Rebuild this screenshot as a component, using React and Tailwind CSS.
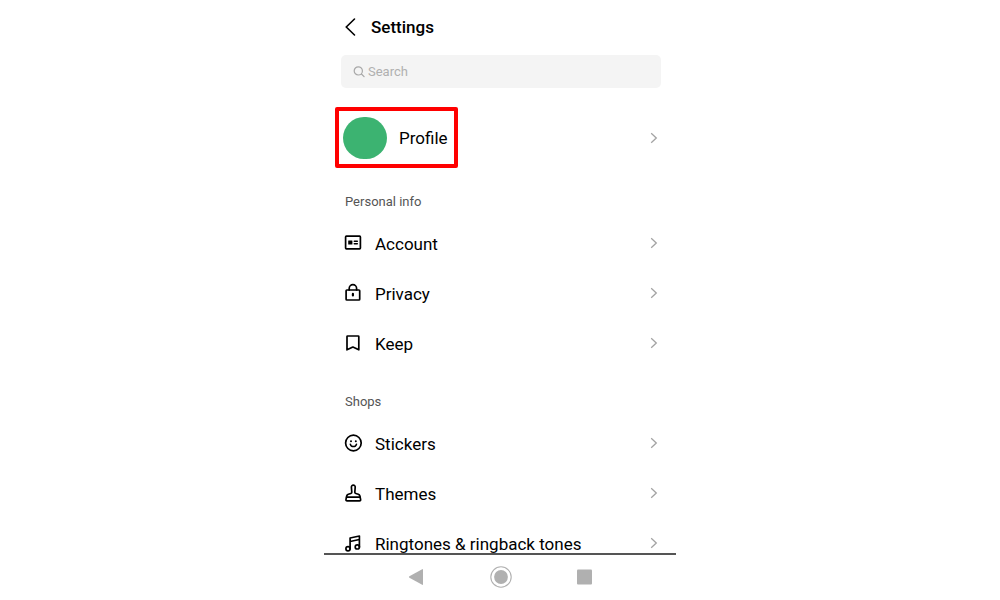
import { clsx } from 'clsx';

function Icon({ children }) {
  return (
    <svg
      viewBox="0 0 20 20"
      className="h-5 w-5 flex-shrink-0"
      fill="none"
      stroke="currentColor"
      strokeWidth="1.7"
      strokeLinecap="round"
      strokeLinejoin="round"
      aria-hidden="true"
    >
      {children}
    </svg>
  );
}

function AccountIcon() {
  return (
    <Icon>
      <rect x="2.6" y="3.2" width="14.8" height="12.6" rx="0.8" />
      <rect x="5.2" y="7.4" width="4.2" height="4.2" rx="0.4" fill="currentColor" stroke="none" />
      <path d="M11.3 8.2h3M11.3 10.8h3" strokeWidth="1.5" />
    </Icon>
  );
}

function PrivacyIcon() {
  return (
    <Icon>
      <rect x="3.1" y="7" width="13.6" height="10" rx="0.8" />
      <path d="M6.2 7V5.4a3.7 3.7 0 0 1 7.4 0V7" />
      <path d="M9.9 10.9v1.6" strokeWidth="2.2" />
    </Icon>
  );
}

function KeepIcon() {
  return (
    <Icon>
      <path d="M4 3.6a.6.6 0 0 1 .6-.6h10.6a.6.6 0 0 1 .6.6v13.2L9.9 14 4 16.8z" />
    </Icon>
  );
}

function StickersIcon() {
  return (
    <Icon>
      <circle cx="10.4" cy="10" r="7.8" />
      <circle cx="8" cy="8.3" r="1" fill="currentColor" stroke="none" />
      <circle cx="12.8" cy="8.3" r="1" fill="currentColor" stroke="none" />
      <path d="M7.3 11.2c.5 1.6 1.6 2.4 3.1 2.4s2.6-.8 3.1-2.4" strokeWidth="1.5" />
    </Icon>
  );
}

function ThemesIcon() {
  return (
    <Icon>
      <path d="M8.8 9.2 8.4 4.2c-.1-1.2.7-2 1.9-2s2 .8 1.9 2l-.4 5c0 .7.3 1.1 1 1.3l2.5.7c.9.3 1.3.8 1.5 1.6l.8 3.6c.2.9-.2 1.4-1.1 1.4H4.1c-.9 0-1.3-.5-1.1-1.4l.8-3.6c.2-.8.6-1.3 1.5-1.6l2.5-.7c.7-.2 1-.6 1-1.3z" />
      <path d="M3.6 14.2h13.4" />
    </Icon>
  );
}

function RingtonesIcon() {
  return (
    <Icon>
      <circle cx="5" cy="15.7" r="2.1" />
      <circle cx="14.3" cy="13.9" r="2.1" />
      <path d="M7.1 15.7V5l9.3-2v10.9M7.1 8.5l9.3-2" />
    </Icon>
  );
}

function Chevron() {
  return (
    <svg
      viewBox="0 0 8 12"
      className="ml-auto h-3 w-2 flex-shrink-0 text-[#a3a3a3]"
      fill="none"
      stroke="currentColor"
      strokeWidth="1.3"
      aria-hidden="true"
    >
      <path d="M1.2 1.2 6.3 6l-5.1 4.8" />
    </svg>
  );
}

const sections = [
  {
    title: 'Personal info',
    items: [
      { label: 'Account', icon: AccountIcon },
      { label: 'Privacy', icon: PrivacyIcon },
      { label: 'Keep', icon: KeepIcon },
    ],
  },
  {
    title: 'Shops',
    items: [
      { label: 'Stickers', icon: StickersIcon },
      { label: 'Themes', icon: ThemesIcon },
      { label: 'Ringtones & ringback tones', icon: RingtonesIcon },
    ],
  },
];

function Section({ title, items, className }) {
  return (
    <section className={clsx('mt-4', className)}>
      <h2 className="flex h-[34px] items-center pt-0.5 pl-[21px] text-[13px] text-[#555555]">{title}</h2>
      <ul>
        {items.map((it) => (
          <li key={it.label}>
            <button type="button" className="flex h-[50px] w-full items-center gap-3 pr-[18px] pl-[19px] text-left">
              <it.icon />
              <span className="pt-0.5">{it.label}</span>
              <Chevron />
            </button>
          </li>
        ))}
      </ul>
    </section>
  );
}

function SystemNav() {
  return (
    <nav className="flex h-[47px] flex-shrink-0 items-center justify-center gap-[62px] border-t-2 border-[#555555] pb-0.5 pl-0.5 text-[#b0b0b0]">
      <button type="button" aria-label="Back">
        <svg viewBox="0 0 22 22" className="h-[22px] w-[22px]" fill="currentColor">
          <path d="M3.4 10.3 16.2 3.2q.8-.4.8.5v14.6q0 .9-.8.5L3.4 11.7q-1.1-.7 0-1.4z" />
        </svg>
      </button>
      <button type="button" aria-label="Home">
        <svg viewBox="0 0 22 22" className="h-[22px] w-[22px]">
          <circle cx="11" cy="11" r="10.2" fill="none" stroke="currentColor" strokeWidth="1.1" />
          <circle cx="11" cy="11" r="6.9" fill="currentColor" />
        </svg>
      </button>
      <button type="button" aria-label="Recent apps">
        <svg viewBox="0 0 22 22" className="h-[22px] w-[22px]" fill="currentColor">
          <rect x="3" y="3.5" width="15" height="15" rx="1" />
        </svg>
      </button>
    </nav>
  );
}

export default function App() {
  return (
    <div className="flex h-screen justify-center bg-white font-[Roboto,sans-serif] text-[17px] leading-6 text-black">
      <div className="flex w-full max-w-[352px] flex-col">
        <main className="min-h-0 flex-1 overflow-hidden">
          <header className="flex h-[55px] items-center gap-3 pb-0.5 pl-[19px]">
            <button type="button" aria-label="Go back">
              <svg viewBox="0 0 16 20" className="h-5 w-4" fill="none" stroke="currentColor" strokeWidth="1.6" strokeLinecap="round">
                <path d="M11.5 2 3.3 10l8.2 8" />
              </svg>
            </button>
            <h1 className="font-medium">Settings</h1>
          </header>

          <label className="mr-[15px] ml-[17px] flex h-[33px] items-center gap-[3px] rounded-[5px] bg-[#f4f4f4] px-3 text-[#a8a8a8]">
            <svg viewBox="0 0 12 12" className="h-3 w-3 flex-shrink-0" fill="none" stroke="currentColor" strokeWidth="1.2" strokeLinecap="round" aria-hidden="true">
              <circle cx="5.3" cy="4.9" r="4.1" />
              <path d="m8.4 8 2.7 2.7" />
            </svg>
            <input
              type="search"
              aria-label="Search"
              placeholder="Search"
              className="min-w-0 flex-1 bg-transparent text-[13px] outline-none placeholder:text-[#b0b0b0]"
            />
          </label>

          <button type="button" className="mt-[19px] flex w-full items-center pr-[18px] pl-[11px] text-left">
            <span className="flex h-[61px] items-center gap-3 rounded-[2px] border-4 border-[#ff0000] pr-[6px] pl-1">
              <span className="h-[42px] w-[44px] rounded-full bg-[#3cb371]" />
              <span>Profile</span>
            </span>
            <Chevron />
          </button>

          {sections.map((s) => (
            <Section key={s.title} {...s} />
          ))}
        </main>
        <SystemNav />
      </div>
    </div>
  );
}
